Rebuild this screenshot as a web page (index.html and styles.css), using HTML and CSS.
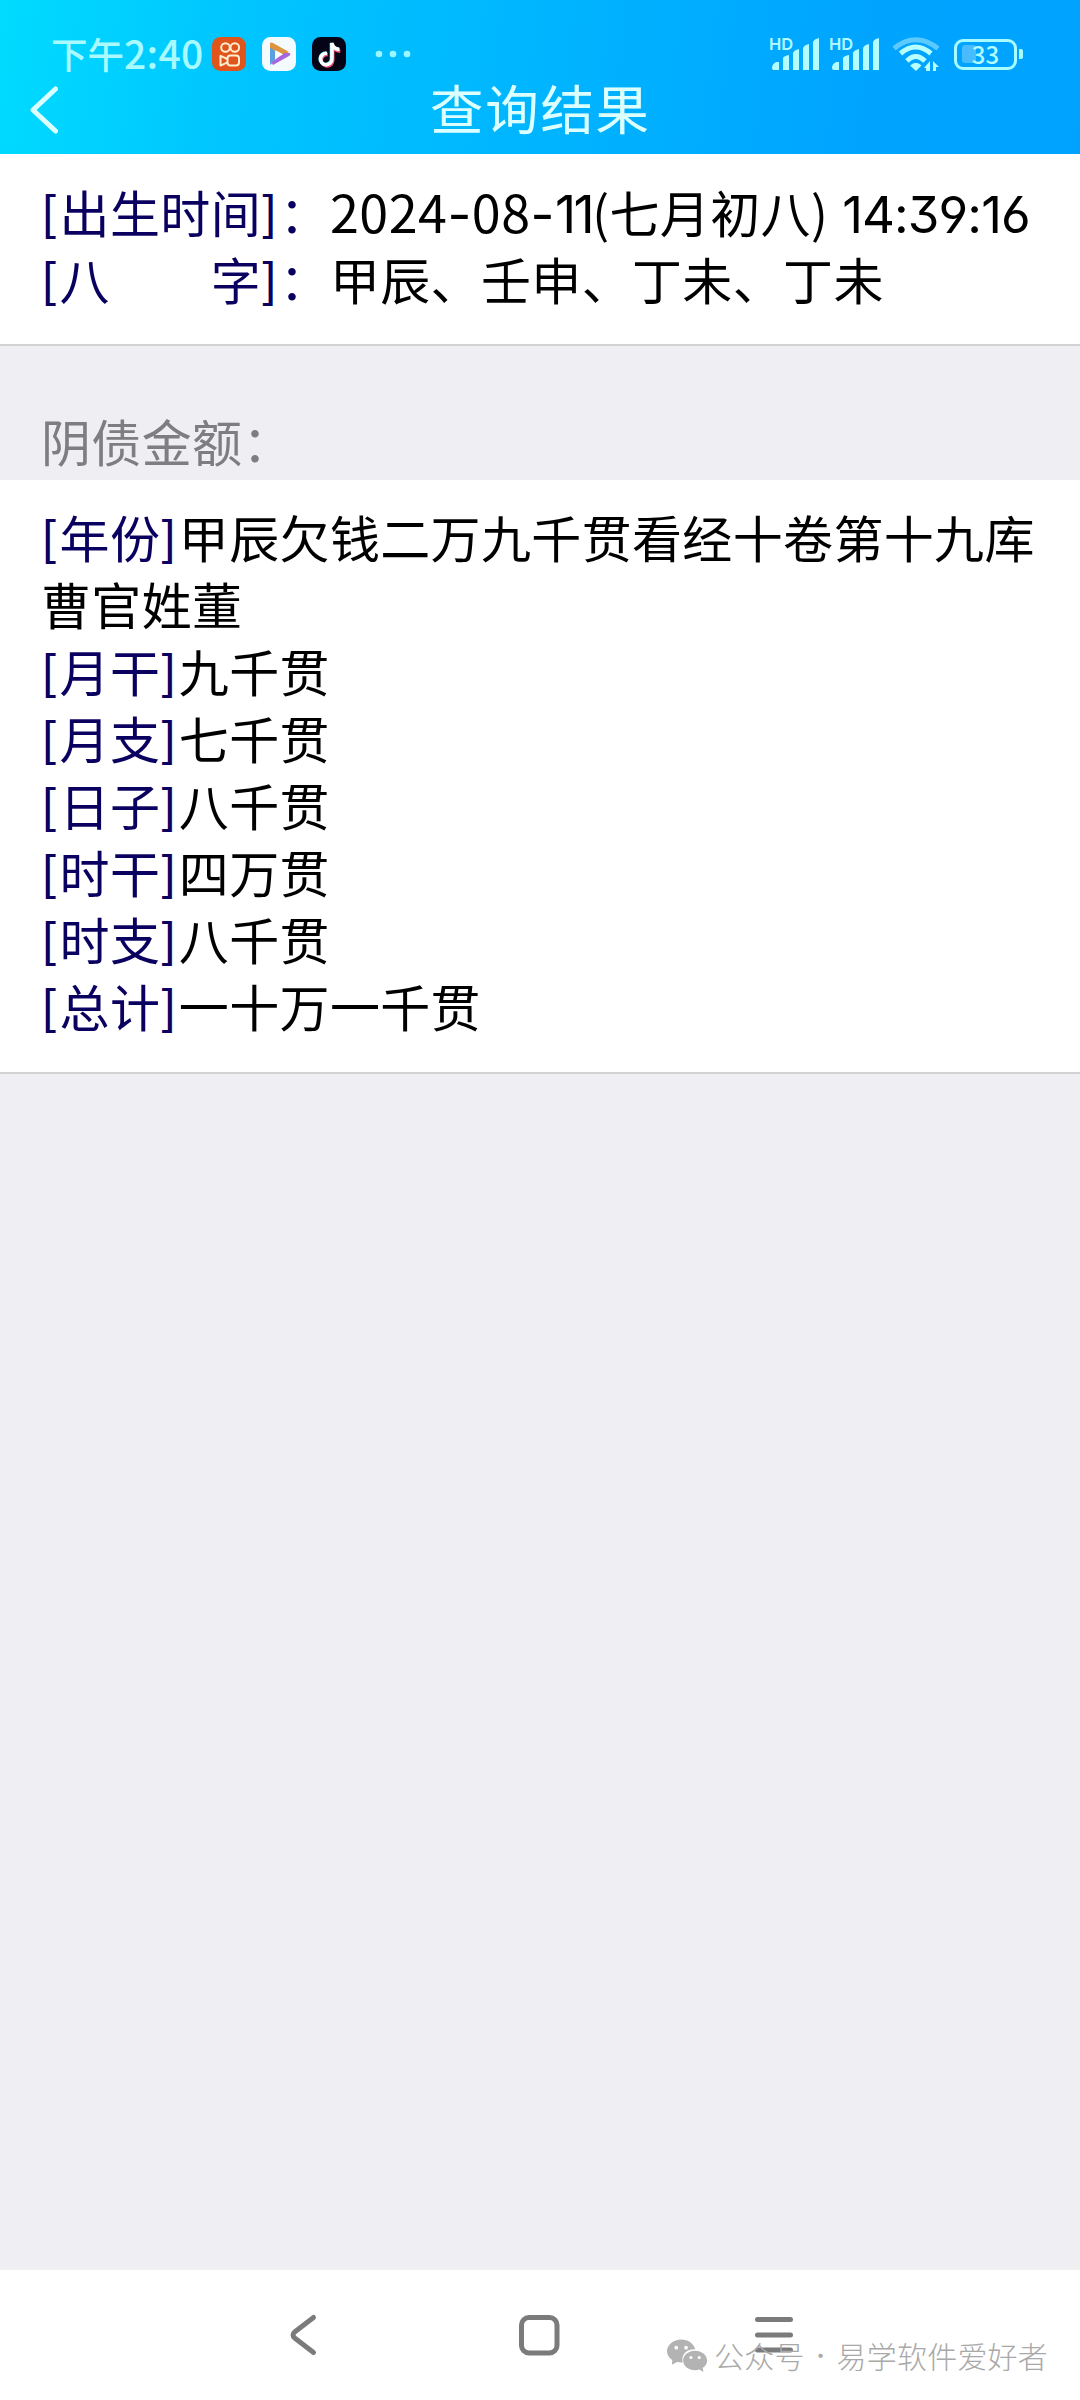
FILE: index.html
```html
<!DOCTYPE html>
<html lang="zh-CN">
<head>
<meta charset="utf-8">
<title>查询结果</title>
<link rel="stylesheet" href="styles.css">
</head>
<body>
<div class="screen">
  <header class="header">
    <div class="status">
      <span class="clock">下午<span class="clock-num">2:40</span></span>
      <div class="apps">
        <svg class="app" viewBox="0 0 34 34">
          <rect width="34" height="34" rx="8.500" fill="#e0551c"/>
          <g fill="none" stroke="#ffeed0" stroke-width="2">
            <circle cx="13.500" cy="10.500" r="4.300"/>
            <circle cx="22.800" cy="10.500" r="4.300"/>
            <rect x="15.500" y="18.500" width="11.500" height="10" rx="3"/>
            <path d="M15.500 22l-7-3.200v9.800l7-3.200" stroke-linejoin="round"/>
          </g>
        </svg>
        <svg class="app" viewBox="0 0 34 34">
          <rect width="34" height="34" rx="8.500" fill="#f4fbff"/>
          <path d="M8 6v22l5-4V14z" fill="#5a9fe0"/>
          <path d="M8 6q1-1 3 0l16 9-5 3L8 11z" fill="#dc9440"/>
          <path d="M11 28q-1 0-1-3l12-9 6 0q1 2-1 3z" fill="#a866de"/>
          <path d="M14 13.500v7.500l7-3.700z" fill="#fff"/>
        </svg>
        <svg class="app" viewBox="0 0 34 34">
          <rect width="34" height="34" rx="8.500" fill="#050416"/>
          <g fill="none" stroke-width="3.400">
            <path d="M20 6.500v16a5.700 5.700 0 1 1-5-5.600M20 7q1 6 7.500 6.500" stroke="#f5507a" transform="translate(.8 .8)"/>
            <path d="M20 6v16a5.700 5.700 0 1 1-5-5.600M20 6q1 6 7.500 6.500" stroke="#70eaf0" transform="translate(-.6 -.3)"/>
            <path d="M20 6v16a5.700 5.700 0 1 1-5-5.600M20 6q1 6 7.500 6.500" stroke="#fff"/>
          </g>
        </svg>
      </div>
      <svg class="more" viewBox="0 0 36 8" fill="#9cf6ff">
        <circle cx="4" cy="4" r="3.300"/><circle cx="18" cy="4" r="3.300"/><circle cx="32" cy="4" r="3.300"/>
      </svg>
      <div class="signals">
        <div class="signal"><span class="hd">HD</span>
          <svg class="bars" viewBox="0 0 50 32" fill="#b4fdff">
            <path d="M2 30q0-4 4-6h3v8H4q-2 0-2-2zM13 32V20q1-2 6-3v15zM23 32V15q1-3 6-4v21zM33 32V10q1-3 6-4v26zM43 32V4q1-3 6-4v32z"/>
          </svg>
        </div>
        <div class="signal"><span class="hd">HD</span>
          <svg class="bars" viewBox="0 0 50 32" fill="#b4fdff">
            <path d="M2 30q0-4 4-6h3v8H4q-2 0-2-2zM13 32V20q1-2 6-3v15zM23 32V15q1-3 6-4v21zM33 32V10q1-3 6-4v26zM43 32V4q1-3 6-4v32z"/>
          </svg>
        </div>
      </div>
      <svg class="wifi" viewBox="0 0 48 36">
        <path d="M2 12.500Q23.500-5 46 12.500" fill="none" stroke="#5cc9ff" stroke-width="5"/>
        <g fill="none" stroke="#b8ffff" stroke-width="5">
          <path d="M8.500 17.500Q23.500 4.500 39 17.500"/>
          <path d="M15 25Q23.500 16 33 25"/>
        </g>
        <path d="M18 29.500q6-5.500 11.500 0L24 35z" fill="#b8ffff"/>
        <path d="M38 35V25l-6 7h2v3zM41 35V25l6 6h-3v4z" fill="#b8ffff"/>
      </svg>
      <div class="battery"><span class="charge"></span><span class="level">33</span></div>
    </div>
    <div class="titlebar">
      <svg class="back" viewBox="0 0 28 48"><path d="M25.500 3L3 24l22.500 21" fill="none" stroke="#dcffff" stroke-width="5" stroke-linecap="round" stroke-linejoin="round"/></svg>
      <h1 class="title">查询结果</h1>
    </div>
  </header>

  <section class="card birth">
    <p class="line"><span class="label"><b>[</b>出生时间<b>]</b>&#xFF1A;</span><span class="stamp"><span class="date">2024<i>-</i>08<i>-</i><u>11</u></span>(七月初八)</span><span class="time">14:39:16</span></p>
    <p class="line"><span class="label"><b>[</b>八&#x3000;&#x3000;字<b>]</b>&#xFF1A;</span>甲辰、壬申、丁未、丁未</p>
  </section>

  <h2 class="section-title">阴债金额&#xFF1A;</h2>

  <section class="card debts">
    <p class="line"><span class="label"><b>[</b>年份<b>]</b></span>甲辰欠钱二万九千贯看经十卷第十九库曹官姓董</p>
    <p class="line"><span class="label"><b>[</b>月干<b>]</b></span>九千贯</p>
    <p class="line"><span class="label"><b>[</b>月支<b>]</b></span>七千贯</p>
    <p class="line"><span class="label"><b>[</b>日子<b>]</b></span>八千贯</p>
    <p class="line"><span class="label"><b>[</b>时干<b>]</b></span>四万贯</p>
    <p class="line"><span class="label"><b>[</b>时支<b>]</b></span>八千贯</p>
    <p class="line"><span class="label"><b>[</b>总计<b>]</b></span>一十万一千贯</p>
  </section>

  <div class="blank"></div>

  <nav class="nav">
    <svg class="nav-icon" viewBox="0 0 44 44"><path d="M31.500 4.500L13 18.700q-4 3.300 0 6.600l18.500 14.200"/></svg>
    <svg class="nav-icon" viewBox="0 0 44 44"><rect x="4.500" y="4.500" width="35.500" height="35.500" rx="7.500"/></svg>
    <svg class="nav-icon" viewBox="0 0 44 44"><path d="M5.500 6.500H38.500M5.500 22H38.500M5.500 37H38.500"/></svg>
    <div class="watermark">
      <svg class="wechat" viewBox="0 0 42 34">
        <path d="M14.500 0C6.500 0 0 5.300 0 12c0 3.700 2 7 5.400 9.200L5 26l5.300-2.800q2 .5 4.200.5h1.500C14 14 22 9.500 29 10 27.500 4.300 21.600 0 14.500 0z" fill="#b3b3b3"/>
        <path d="M28.800 11.500c-6.800 0-12.300 4.500-12.300 10s5.500 10 12.300 10q2.400 0 4.500-.7l4 2.700-.7-4.400c2.800-1.800 4.500-4.500 4.500-7.600 0-5.500-5.500-10-12.300-10z" fill="#b3b3b3"/>
        <g fill="#fff"><circle cx="9.500" cy="8.500" r="1.900"/><circle cx="19.500" cy="8.500" r="1.900"/><circle cx="24.500" cy="18.500" r="1.600"/><circle cx="33" cy="18.500" r="1.600"/></g>
      </svg>
      <span>公众号</span><span class="dot">·</span><span>易学软件爱好者</span>
    </div>
  </nav>
</div>
</body>
</html>
```
FILE: styles.css
```css
* { box-sizing: border-box; margin: 0; padding: 0; }

body {
  width: 1080px;
  background: #efeef3;
  font-family: "Noto Sans CJK SC", sans-serif;
}

svg { display: block; flex: none; }

.screen {
  display: flex;
  flex-direction: column;
  width: 1080px;
  height: 2400px;
}

.header {
  flex: none;
  height: 154px;
  padding-top: 34px;
  background: linear-gradient(97deg, #00dbff 0%, #00c5ff 22%, #00b6ff 48%, #00a5ff 78%, #00a2ff 100%);
}

.status {
  display: flex;
  align-items: center;
  height: 40px;
  padding: 0 57px 0 51px;
}

.clock {
  flex: none;
  width: 161px;
  font-size: 36.500px;
  font-weight: 500;
  line-height: 38px;
  padding-bottom: 2px;
  white-space: nowrap;
  color: #a8faff;
}

.clock-num { font-size: 39px; line-height: 1; letter-spacing: .3px; }

.apps { display: flex; gap: 16px; }

.app { width: 34px; height: 34px; }

.more { width: 36px; height: 8px; margin-left: 29px; }

.signals { display: flex; gap: 10px; margin-left: auto; }

.signal { position: relative; width: 50px; height: 32px; }

.bars { width: 50px; height: 32px; }

.hd {
  position: absolute;
  left: -1px;
  top: -2px;
  font: 600 16.500px/16px Inter, sans-serif;
  color: #b4fdff;
}

.wifi { width: 48px; height: 36px; margin-left: 12px; }

.battery {
  position: relative;
  display: flex;
  align-items: center;
  justify-content: center;
  width: 63px;
  height: 31px;
  margin: 0 6px 0 14px;
  border: 3.500px solid #a8fbff;
  border-radius: 9px;
}

.battery::after {
  content: "";
  position: absolute;
  right: -9px;
  top: 7px;
  width: 4px;
  height: 10px;
  border-radius: 0 2px 2px 0;
  background: #a8fbff;
}

.charge {
  position: absolute;
  left: 5px;
  top: 3px;
  width: 14px;
  height: 18px;
  border-radius: 3px;
  background: #48bcff;
}

.level {
  position: relative;
  padding-bottom: 1px;
  font: 500 24px/24px "Noto Sans CJK SC", sans-serif;
  color: #b4fdff;
}

.titlebar {
  display: flex;
  align-items: center;
  height: 72px;
  padding-left: 30px;
}

.back { width: 28px; height: 48px; }

.title {
  margin-left: 372px;
  padding-bottom: 6px;
  font-size: 53.500px;
  font-weight: 400;
  line-height: 66px;
  letter-spacing: 1.700px;
  color: #dcffff;
}

.card {
  flex: none;
  padding: 24px 30px 0 41px;
  background: #fff;
  border-bottom: 2px solid #d2d2d2;
}

.birth { height: 192px; }

.debts { height: 594px; padding-top: 23px; }

.line {
  font-size: 50px;
  line-height: 67px;
  letter-spacing: .35px;
  color: #000;
}

.birth .line {
  display: flex;
  align-items: baseline;
  height: 67px;
  white-space: pre;
}

.label { color: #0a0060; }

.label b {
  font-size: 46px;
  font-weight: 500;
  line-height: 1;
  letter-spacing: 2.200px;
  vertical-align: 2px;
}

.date { font-size: 52px; line-height: 1; letter-spacing: .5px; }

.date i, .date u {
  font-family: Inter, sans-serif;
  font-style: normal;
  text-decoration: none;
}

.date u { letter-spacing: -2.500px; }

.time {
  margin-left: 14px;
  font-family: Inter, sans-serif;
  font-size: 51px;
  letter-spacing: -.9px;
  font-feature-settings: "cv03", "cv04", "cv09";
}

.section-title {
  flex: none;
  height: 134px;
  padding: 61px 41px 0;
  font-size: 50px;
  font-weight: 400;
  line-height: 67px;
  letter-spacing: .35px;
  color: #7d7d82;
}

.blank { flex: 1; border-bottom: 4px solid #f0f0f1; }

.nav {
  position: relative;
  display: flex;
  gap: 191px;
  height: 130px;
  padding: 43px 0 0 282px;
  background: #fff;
}

.nav-icon {
  width: 44px;
  height: 44px;
  fill: none;
  stroke: #7b7b7b;
  stroke-width: 5;
  stroke-linecap: round;
}

.watermark {
  position: absolute;
  left: 667px;
  top: 63px;
  display: flex;
  align-items: center;
  font-size: 30px;
  font-weight: 300;
  line-height: 44px;
  letter-spacing: .2px;
  color: #a9a9a9;
}

.wechat { width: 41px; height: 34px; margin: 2px 6px 0 0; }

.dot { width: 32px; font-family: Inter, sans-serif; font-weight: 500; text-align: center; }
```
